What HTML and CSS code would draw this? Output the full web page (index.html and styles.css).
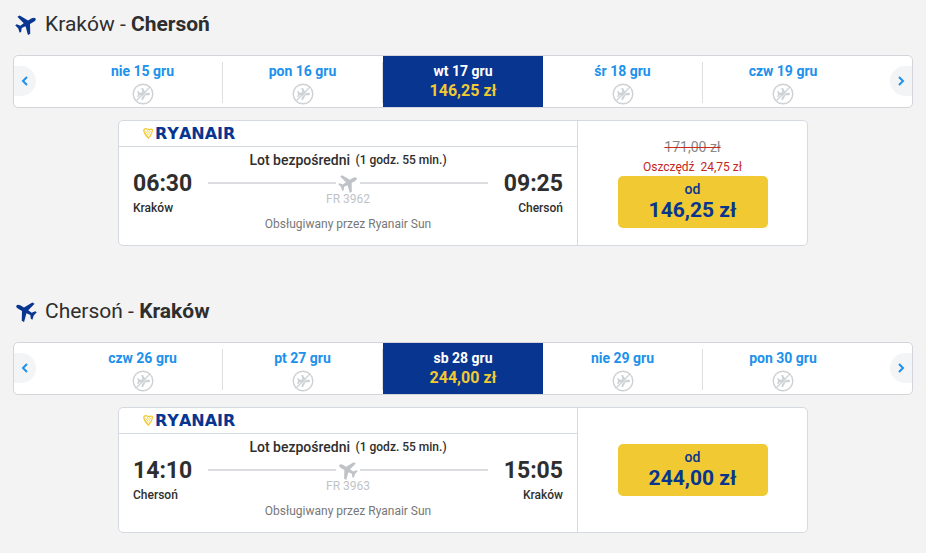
FILE: index.html
```html
<!DOCTYPE html>
<html lang="pl">
<head>
    <meta charset="UTF-8">
    <meta name="viewport" content="width=device-width, initial-scale=1.0">
    <title>Kraków - Chersoń</title>
    <link rel="stylesheet" href="styles.css">
</head>
<body>
    <!-- Shared icons -->
    <svg class="sprite" aria-hidden="true">
        <symbol id="plane" viewBox="0 0 24 24">
            <path transform="rotate(60 12 12)" d="M12 0c1.500 0 2.200 1.800 2.200 3.500v4.700L23.500 13.300V16.200l-9.500-2.500-.5 4.600 3.300 2.500v2l-4.800-1.100-4.800 1.100v-2l3.300-2.500-.5-4.600L.5 16.200V13.300L9.800 8.200V3.500C9.800 1.800 10.500 0 12 0z"/>
        </symbol>
        <symbol id="no-flight" viewBox="0 0 22 22">
            <circle cx="11" cy="11" r="9.800" fill="none" stroke="currentColor" stroke-width="1.400"/>
            <path fill="currentColor" d="M18 11c0-.9-.8-1.300-1.600-1.300h-2.900L11 5H9.300l1 4.600-2.600.2L6.300 8H5.200l.8 3-.8 3h1.100l1.400-1.800 2.600.2-1 4.600H11l2.500-4.700h2.900c.8 0 1.600-.4 1.600-1.300z"/>
            <path d="M5 18.600L18.600 5" stroke="#fff" stroke-width=".7"/>
            <path d="M4 18L18 4" stroke="currentColor" stroke-width="1.300"/>
        </symbol>
        <symbol id="harp" viewBox="0 0 10 11">
            <path fill="none" stroke="#f1c933" stroke-width="1.200" d="M.8 3C.5.600 3 .3 4.500 1.200S8 .5 9.300 1.500C9.500 5 7.500 8 5.200 10.200 3.500 8.500 1.500 6 .8 3z"/>
            <path stroke="#f1c933" stroke-width=".8" d="M2 2.500l4 5M4 2l3 4M6 2l2 2.500M2 5l3 4"/>
        </symbol>
        <symbol id="chevron" viewBox="0 0 8 10">
            <path fill="none" stroke="currentColor" stroke-width="2" d="M6 1L2 5l4 4"/>
        </symbol>
    </svg>

    <main class="container">
        <!-- Outbound -->
        <section class="flight">
            <h2 class="route">
                <svg class="route-icon"><use href="#plane"/></svg>
                <span>Kraków - <strong>Chersoń</strong></span>
            </h2>
            <div class="date-bar">
                <button class="arrow arrow-prev" aria-label="Poprzednie dni"><svg><use href="#chevron"/></svg></button>
                <ul class="days">
                    <li><button class="day">nie 15 gru<svg><use href="#no-flight"/></svg></button></li>
                    <li><button class="day">pon 16 gru<svg><use href="#no-flight"/></svg></button></li>
                    <li class="active"><button class="day">wt 17 gru<span class="day-price">146,25 zł</span></button></li>
                    <li><button class="day">śr 18 gru<svg><use href="#no-flight"/></svg></button></li>
                    <li><button class="day">czw 19 gru<svg><use href="#no-flight"/></svg></button></li>
                </ul>
                <button class="arrow arrow-next" aria-label="Następne dni"><svg><use href="#chevron"/></svg></button>
            </div>
            <div class="card">
                <div class="details">
                    <div class="carrier"><svg><use href="#harp"/></svg>RYANAIR</div>
                    <div class="trip">
                        <p class="duration">Lot bezpośredni <small>(1 godz. 55 min.)</small></p>
                        <div class="legs">
                            <div class="stop"><time>06:30</time><span>Kraków</span></div>
                            <div class="path">
                                <div class="line"><svg><use href="#plane"/></svg></div>
                                <span>FR 3962</span>
                            </div>
                            <div class="stop stop-end"><time>09:25</time><span>Chersoń</span></div>
                        </div>
                        <p class="operator">Obsługiwany przez Ryanair Sun</p>
                    </div>
                </div>
                <div class="fare">
                    <del>171,00 zł</del>
                    <p class="saving">Oszczędź&nbsp; 24,75 zł</p>
                    <button class="btn">od<strong>146,25 zł</strong></button>
                </div>
            </div>
        </section>

        <!-- Return -->
        <section class="flight return">
            <h2 class="route">
                <svg class="route-icon"><use href="#plane"/></svg>
                <span>Chersoń - <strong>Kraków</strong></span>
            </h2>
            <div class="date-bar">
                <button class="arrow arrow-prev" aria-label="Poprzednie dni"><svg><use href="#chevron"/></svg></button>
                <ul class="days">
                    <li><button class="day">czw 26 gru<svg><use href="#no-flight"/></svg></button></li>
                    <li><button class="day">pt 27 gru<svg><use href="#no-flight"/></svg></button></li>
                    <li class="active"><button class="day">sb 28 gru<span class="day-price">244,00 zł</span></button></li>
                    <li><button class="day">nie 29 gru<svg><use href="#no-flight"/></svg></button></li>
                    <li><button class="day">pon 30 gru<svg><use href="#no-flight"/></svg></button></li>
                </ul>
                <button class="arrow arrow-next" aria-label="Następne dni"><svg><use href="#chevron"/></svg></button>
            </div>
            <div class="card">
                <div class="details">
                    <div class="carrier"><svg><use href="#harp"/></svg>RYANAIR</div>
                    <div class="trip">
                        <p class="duration">Lot bezpośredni <small>(1 godz. 55 min.)</small></p>
                        <div class="legs">
                            <div class="stop"><time>14:10</time><span>Chersoń</span></div>
                            <div class="path">
                                <div class="line"><svg><use href="#plane"/></svg></div>
                                <span>FR 3963</span>
                            </div>
                            <div class="stop stop-end"><time>15:05</time><span>Kraków</span></div>
                        </div>
                        <p class="operator">Obsługiwany przez Ryanair Sun</p>
                    </div>
                </div>
                <div class="fare">
                    <button class="btn">od<strong>244,00 zł</strong></button>
                </div>
            </div>
        </section>
    </main>
</body>
</html>
```
FILE: styles.css
```css
:root {
    --navy: #073590;
    --yellow: #f1c933;
    --blue: #2091eb;
    --text-color: #2e2e2e;
    --border-color: #d2d5d9;
}
* {
    margin: 0;
    padding: 0;
    box-sizing: border-box;
}
body {
    font-family: Roboto, sans-serif;
    font-size: 12px;
    line-height: 16px;
    background-color: #f3f3f3;
    color: var(--text-color);
}
button {
    font: inherit;
    border: none;
    background: none;
    cursor: pointer;
}
.sprite {
    display: none;
}
.container {
    padding: 8px 13px 20px;
}
.flight + .flight {
    margin-top: 49px;
}
/* Route heading */
.route {
    display: flex;
    align-items: center;
    gap: 8px;
    height: 32px;
    margin-bottom: 15px;
    padding-left: 2px;
    font-size: 21px;
    font-weight: 400;
}
.route strong {
    font-weight: 700;
}
.route-icon {
    width: 22px;
    height: 22px;
    fill: var(--navy);
}
.return .route-icon,
.return .line svg {
    transform: scaleX(-1);
}
/* Date bar */
.date-bar {
    display: flex;
    align-items: center;
    height: 53px;
    background: white;
    border: 1px solid var(--border-color);
    border-radius: 5px;
    overflow: hidden;
}
.arrow {
    width: 22px;
    height: 30px;
    margin-bottom: 2px;
    color: var(--blue);
    background: #f2f4f6;
}
.arrow svg {
    display: block;
    width: 8px;
    height: 10px;
    margin: 0 auto;
}
.arrow-prev {
    border-radius: 0 15px 15px 0;
}
.arrow-next {
    border-radius: 15px 0 0 15px;
}
.arrow-next svg {
    transform: scaleX(-1);
}
.days {
    display: flex;
    flex: 1;
    align-self: stretch;
    margin: 0 27px;
    list-style: none;
}
.days li {
    display: flex;
    flex: 1;
    padding: 6px 0 4px;
}
.days li.active {
    padding: 0;
    background: var(--navy);
}
.day {
    display: flex;
    flex: 1;
    flex-direction: column;
    align-items: center;
    gap: 4px;
    padding-top: 1px;
    font-size: 14px;
    font-weight: 700;
    color: var(--blue);
    border-right: 1px solid #dcdfe2;
}
.days li:last-child .day {
    border-right: none;
}
.day svg {
    flex-shrink: 0;
    width: 22px;
    height: 22px;
    color: #cfd2d4;
}
.active .day {
    padding-top: 7px;
    color: white;
    border-right: none;
}
.day-price {
    font-size: 16px;
    color: var(--yellow);
}
/* Flight card */
.card {
    display: flex;
    max-width: 690px;
    min-height: 126px;
    margin: 12px auto 0;
    background: white;
    border: 1px solid #d5dae2;
    border-radius: 5px;
}
.details {
    flex: 2;
    border-right: 1px solid #d5dae2;
}
.carrier {
    display: flex;
    align-items: center;
    gap: 2px;
    height: 26px;
    padding-left: 24px;
    font-family: "DejaVu Sans", sans-serif;
    font-size: 16px;
    font-weight: 700;
    font-kerning: none;
    color: var(--navy);
    border-bottom: 1px solid #d5dae2;
}
.carrier svg {
    width: 10px;
    height: 11px;
}
.trip {
    padding: 5px 14px 0;
}
.duration {
    font-size: 14px;
    font-weight: 500;
    text-align: center;
}
.duration small {
    margin-left: 2px;
    font-size: 12px;
    vertical-align: 1px;
}
.legs {
    display: flex;
    justify-content: space-between;
    gap: 16px;
}
.stop {
    display: flex;
    flex-direction: column;
    font-weight: 500;
}
.stop time {
    font-size: 23px;
    font-weight: 700;
    line-height: 32px;
}
.stop-end {
    align-items: flex-end;
}
.path {
    flex: 1;
    padding-top: 6px;
    line-height: 14px;
    color: #bfc3c8;
    text-align: center;
}
.line {
    display: flex;
    align-items: center;
    gap: 2px;
    height: 18px;
}
.line::before,
.line::after {
    content: "";
    flex: 1;
    height: 2px;
    background: #dadcdf;
}
.line svg {
    width: 20px;
    height: 20px;
    fill: currentColor;
}
.operator {
    color: #777;
    text-align: center;
}
/* Fare */
.fare {
    display: flex;
    flex: 1;
    flex-direction: column;
    align-items: center;
    justify-content: center;
}
.fare del {
    margin-bottom: 4px;
    font-size: 14px;
    color: #888;
    text-decoration-color: #cc2a1a;
}
.saving {
    margin-bottom: 1px;
    color: #c4261d;
}
.btn {
    display: flex;
    flex-direction: column;
    align-items: center;
    width: 150px;
    height: 52px;
    padding-top: 5px;
    font-size: 14px;
    font-weight: 500;
    color: var(--navy);
    background-color: var(--yellow);
    border-radius: 5px;
}
.btn strong {
    font-size: 21px;
    font-weight: 700;
    line-height: 26px;
}
```
